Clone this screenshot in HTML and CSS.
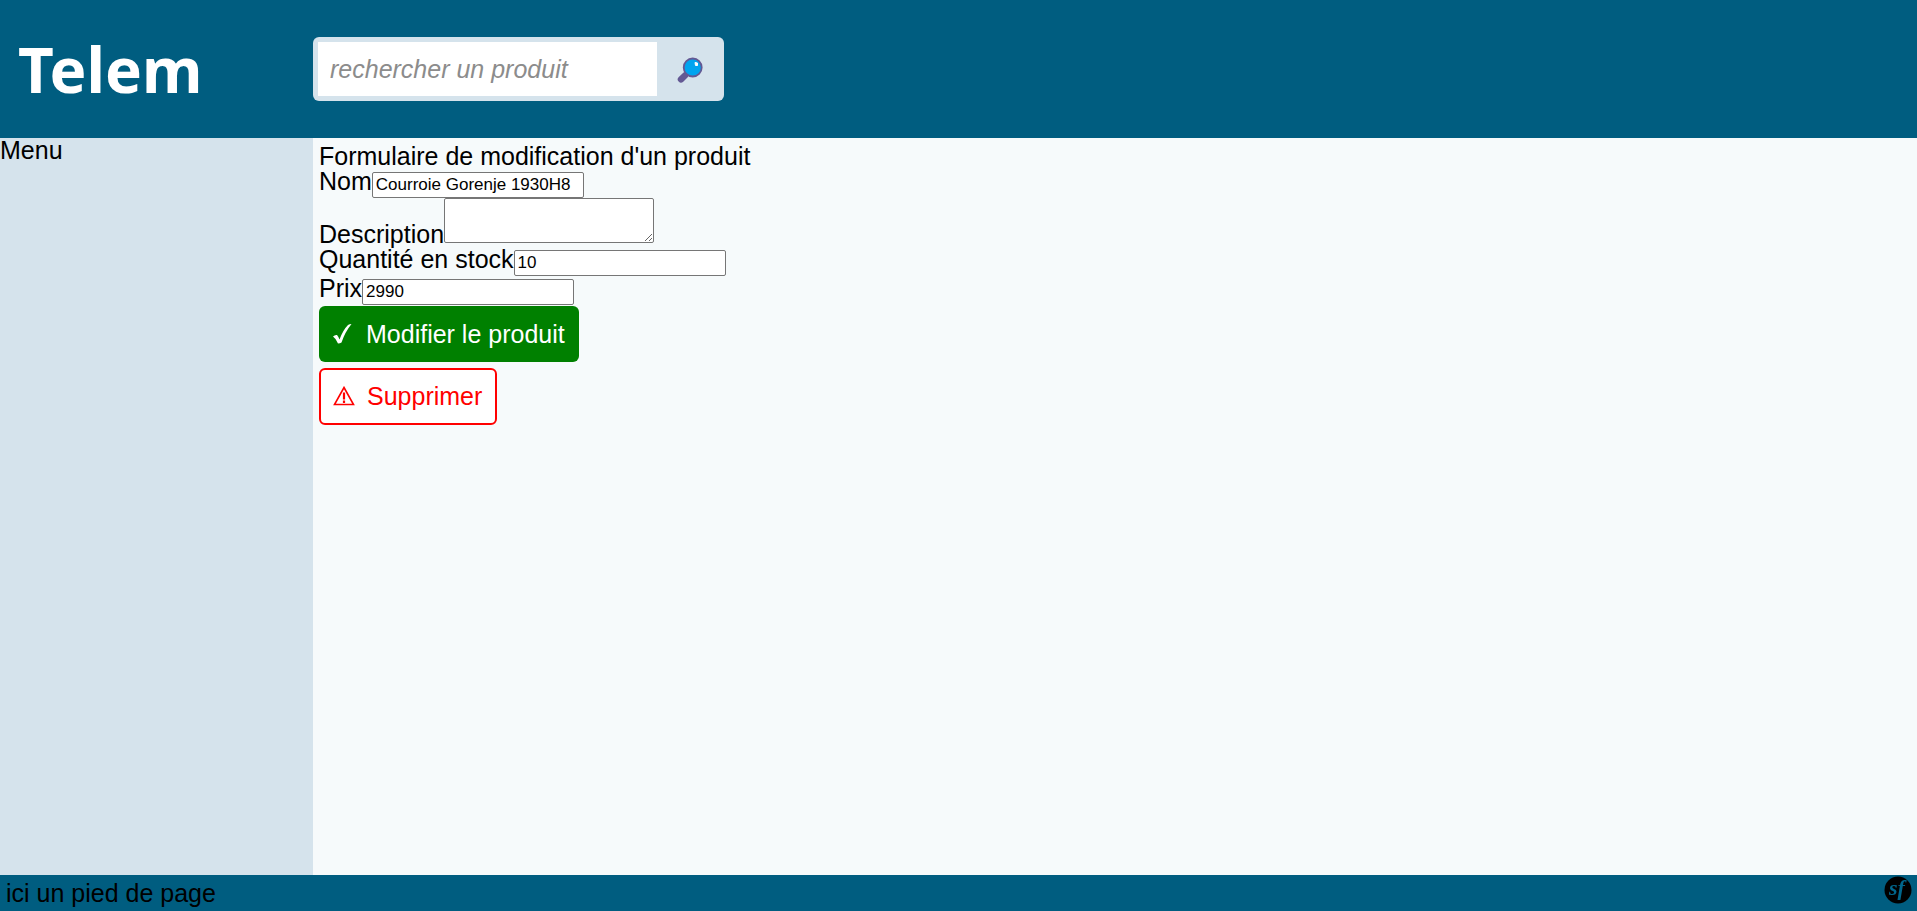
FILE: index.html
```
<!DOCTYPE html>
<html lang="fr">
<head>
    <meta charset="UTF-8">
    <meta name="viewport" content="width=device-width, initial-scale=1.0">
    <title>Telem - Modifier un produit</title>
    <link rel="stylesheet" href="styles.css">
</head>
<body>
    <header>
        <a class="logo" href="#">Telem</a>
        <form class="search" action="#" method="get">
            <input type="text" name="q" placeholder="rechercher un produit" aria-label="rechercher un produit">
            <button type="submit" aria-label="Rechercher">
                <svg width="26" height="26" viewBox="0 0 26 26">
                    <path d="M4 22.300L8 18.500" stroke="#635994" stroke-width="6.500" stroke-linecap="round"/>
                    <path d="M7 19L11 15" stroke="#635994" stroke-width="3"/>
                    <circle cx="15.700" cy="10.500" r="9" fill="#00a4ef" stroke="#635994" stroke-width="1.800"/>
                    <path d="M18 5.500l2.500 .5v2.500h-2z" fill="#fff" stroke="#fff" stroke-linejoin="round"/>
                </svg>
            </button>
        </form>
    </header>

    <div class="content">
        <nav>Menu</nav>
        <main>
            <h1>Formulaire de modification d'un produit</h1>
            <form action="#" method="post">
                <div><label for="nom">Nom</label><input type="text" id="nom" name="nom" value="Courroie Gorenje 1930H8"></div>
                <div><label for="description">Description</label><textarea id="description" name="description"></textarea></div>
                <div><label for="stock">Quantité en stock</label><input type="text" id="stock" name="stock" value="10"></div>
                <div><label for="prix">Prix</label><input type="text" id="prix" name="prix" value="2990"></div>
                <button class="btn btn-save" type="submit">
                    <svg width="22" height="22" viewBox="0 0 22 22">
                        <path d="M1 13.500Q3 11.500 5 12Q6.500 13.500 7.500 16.500Q11 7 16 2Q17.500 1 19.500 1Q13 9 9.500 19.500Q8 20.500 6 20.500Q4 15.500 1 13.500Z" fill="#fff"/>
                    </svg>
                    Modifier le produit
                </button>
            </form>
            <form action="#" method="post">
                <button class="btn btn-delete" type="submit">
                    <svg width="22" height="22" viewBox="0 0 22 22">
                        <path d="M11 1.500L20.500 18.500H1.500Z" fill="none" stroke="#f00" stroke-width="1.600"/>
                        <path d="M11 6.500V13.500M11 14.500V17" stroke="#f00" stroke-width="2.200"/>
                    </svg>
                    Supprimer
                </button>
            </form>
        </main>
    </div>

    <footer>ici un pied de page</footer>

    <!-- Symfony toolbar -->
    <button class="toolbar" type="button" aria-label="Symfony">
        <svg width="28" height="28" viewBox="0 0 28 28">
            <circle cx="14" cy="14" r="13.500" fill="#000"/>
            <text x="5" y="19" class="sf">sf</text>
        </svg>
    </button>
</body>
</html>
```
FILE: styles.css
```
* {
    box-sizing: border-box;
}
body {
    display: flex;
    flex-direction: column;
    min-height: 100vh;
    margin: 0;
    font-family: "Liberation Sans", Arial, sans-serif;
    font-size: 25px;
    line-height: 25px;
    color: #000;
    background-color: #f6fafb;
}

header {
    display: grid;
    grid-template-columns: 313px 1fr;
    align-items: center;
    height: 138px;
    background-color: #005d80;
}
.logo {
    padding-left: 18px;
    font-family: "Noto Sans", sans-serif;
    font-size: 62px;
    font-weight: bold;
    line-height: 80px;
    color: #fff;
    text-decoration: none;
}

.search {
    display: flex;
    justify-self: start;
    padding: 5px;
    background-color: #d5e3ec;
    border-radius: 6px;
}
.search input {
    width: 339px;
    height: 54px;
    padding: 0 12px;
    border: none;
    font-family: inherit;
    font-size: 25px;
}
.search input::placeholder {
    font-style: italic;
    color: #8c8c8c;
}
.search button {
    display: flex;
    align-items: center;
    justify-content: center;
    width: 62px;
    padding: 2px 0 0 4px;
    border: none;
    background: none;
    cursor: pointer;
}

.content {
    display: grid;
    grid-template-columns: 313px 1fr;
    flex: 1;
}
nav {
    background-color: #d5e3ec;
}
main {
    padding: 6px;
}
h1 {
    margin: 0;
    font-size: 25px;
    font-weight: normal;
}

main input,
main textarea {
    width: 212px;
    height: 26px;
    padding: 1px 3px;
    border: 1px solid #767676;
    border-radius: 2px;
    font-family: "Liberation Sans", Arial, sans-serif;
    font-size: 17px;
    background-color: #fff;
}
main textarea {
    width: 210px;
    height: 45px;
}

.btn {
    display: flex;
    align-items: center;
    gap: 12px;
    height: 56px;
    padding: 0 14px 0 13px;
    border: none;
    border-radius: 6px;
    font-family: inherit;
    font-size: 25px;
    cursor: pointer;
}
.btn-save {
    margin: 1px 0 6px;
    color: #fff;
    background-color: #008000;
}
.btn-delete {
    height: 57px;
    padding: 0 13px 0 12px;
    border: 2px solid #f00;
    color: #f00;
    background-color: #fff;
}

footer {
    padding: 6px 6px 5px;
    background-color: #005d80;
}

.toolbar {
    position: fixed;
    right: 5px;
    bottom: 7px;
    display: flex;
    padding: 0;
    border: none;
    background: none;
    cursor: pointer;
}
.sf {
    font-family: "Liberation Serif", serif;
    font-size: 22px;
    font-style: italic;
    font-weight: bold;
    fill: #00668c;
}
```
